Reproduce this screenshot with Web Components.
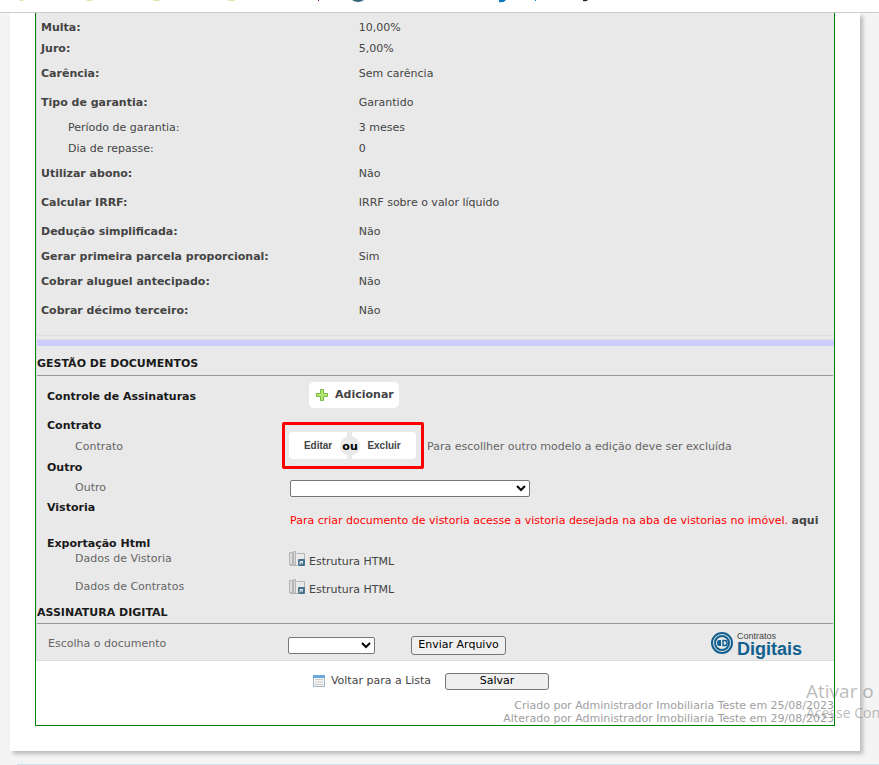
<!DOCTYPE html>
<html lang="pt-BR">
<head>
<meta charset="utf-8">
<meta name="viewport" content="width=device-width, initial-scale=1">
<title>Contrato - Gestão de documentos</title>
<style>
  html, body { margin: 0; height: 100%; }
  body { background: #f4f4f4; color: #444; font: 11px/14px Verdana, "DejaVu Sans", sans-serif; overflow: hidden; }
</style>
</head>
<body>
<contract-page></contract-page>

<template id="t-page">
  <style>
    :host { display: block; }
    main { margin: 0 19px 0 10px; padding: 0 25px 25px 25px; background: #fff; box-shadow: 3px 3px 4px #bbb; }
    .frame { border: 1px solid #008000; border-top: 0; }
    .panel { background: #e9e9e9; border-left: 1px solid #ddd; border-bottom: 1px solid #ddd; }
    .details { padding: 4px 0 10px; }
    .docs { border-bottom: 1px solid #ddd; padding-top: 3px; }
    .bar { height: 6px; border-top: 1px solid #ddd; background: #ccf; }
    footer { margin: 13px 0 0 17px; border-top: 1px solid #cfe4ea; height: 8px; }
    select, button { box-sizing: border-box; font: inherit; color: #000; border: 1px solid #767676; border-radius: 2px; padding: 0; margin: 0; }
    select { height: 17px; background: #fff; display: block; }
    button { background: #efefef; border-radius: 3px; }
    .wide { width: 240px; }
    .short { width: 87px; }
    .send { width: 95px; height: 19px; }
    .save { width: 104px; height: 17px; }
    .red { color: #f00; white-space: nowrap; }
    a { color: #444; text-decoration: none; }
    .icon-link { display: inline-flex; align-items: center; gap: 4px; }
    .icon-link svg { flex: none; }
    .sign { display: flex; align-items: center; height: 36px; padding: 6px 32px 0 11px; box-sizing: border-box; color: #666; }
    .sign label { flex: 0 0 240px; margin-top: -2px; }
    .sign .send { margin-left: 36px; }
    .sign brand-logo { margin-left: auto; }
    .actions { display: flex; justify-content: center; align-items: center; gap: 14px; height: 36px; padding: 2px 8px 0 0; }
    .actions .icon-link { gap: 6px; }
    .log { margin: 0; text-align: right; color: #a0a0a0; line-height: 13px; }
  </style>
  <top-strip></top-strip>
  <main>
    <div class="frame">
      <section class="panel details">
        <detail-row compact><b slot="label">Multa:</b>10,00%</detail-row>
        <detail-row compact><b slot="label">Juro:</b>5,00%</detail-row>
        <detail-row><b slot="label">Carência:</b>Sem carência</detail-row>
        <detail-row><b slot="label">Tipo de garantia:</b>Garantido</detail-row>
        <detail-row compact sub><span slot="label">Período de garantia:</span>3 meses</detail-row>
        <detail-row compact sub><span slot="label">Dia de repasse:</span>0</detail-row>
        <detail-row><b slot="label">Utilizar abono:</b>Não</detail-row>
        <detail-row><b slot="label">Calcular IRRF:</b>IRRF sobre o valor líquido</detail-row>
        <detail-row><b slot="label">Dedução simplificada:</b>Não</detail-row>
        <detail-row compact><b slot="label">Gerar primeira parcela proporcional:</b>Sim</detail-row>
        <detail-row><b slot="label">Cobrar aluguel antecipado:</b>Não</detail-row>
        <detail-row><b slot="label">Cobrar décimo terceiro:</b>Não</detail-row>
      </section>
      <section class="panel docs">
        <div class="bar"></div>
        <section-title style="--above: 12px; --below: 5px">GESTÃO DE DOCUMENTOS</section-title>
        <doc-row kind="add"><span slot="label">Controle de Assinaturas</span><add-button>Adicionar</add-button></doc-row>
        <doc-row><span slot="label">Contrato</span></doc-row>
        <doc-row sub><span slot="label">Contrato</span><edit-choice></edit-choice></doc-row>
        <doc-row><span slot="label">Outro</span></doc-row>
        <doc-row sub kind="field"><label slot="label" for="other">Outro</label><select id="other" class="wide"><option></option></select></doc-row>
        <doc-row kind="note"><span slot="label">Vistoria</span><span class="red">Para criar documento de vistoria acesse a vistoria desejada na aba de vistorias no imóvel. <a href="#"><b>aqui</b></a></span></doc-row>
        <doc-row kind="group"><span slot="label">Exportação Html</span></doc-row>
        <doc-row sub kind="export"><span slot="label">Dados de Vistoria</span><a class="icon-link" href="#"><file-icon></file-icon>Estrutura HTML</a></doc-row>
        <doc-row sub kind="export"><span slot="label">Dados de Contratos</span><a class="icon-link" href="#"><file-icon></file-icon>Estrutura HTML</a></doc-row>
        <section-title>ASSINATURA DIGITAL</section-title>
        <div class="sign">
          <label for="doc">Escolha o documento</label>
          <select id="doc" class="short"><option></option></select>
          <button class="send" type="button">Enviar Arquivo</button>
          <brand-logo></brand-logo>
        </div>
      </section>
      <div class="actions">
        <a class="icon-link" href="#">
          <svg width="12" height="12" viewBox="0 0 12 12" aria-hidden="true"><path d="M0 0h12v12H0z" fill="#a3b6c8"/><path d="M0 0h12v3H0z" fill="#69a9de"/><path d="M1 3h10v8H1z" fill="#f5f5f5"/><path d="M2 4.500h8M2 7h8M2 9.500h8" stroke="#ccc"/></svg>
          Voltar para a Lista</a>
        <button class="save" type="button">Salvar</button>
      </div>
      <p class="log">Criado por Administrador Imobiliaria Teste em 25/08/2023<br>Alterado por Administrador Imobiliaria Teste em 29/08/2023</p>
    </div>
  </main>
  <footer></footer>
  <os-watermark></os-watermark>
</template>

<template id="t-strip">
  <style>
    :host { display: block; height: 12px; background: #fff; border-bottom: 1px solid #ccc; position: relative; z-index: 1; overflow: hidden; }
    svg { display: block; }
  </style>
  <svg width="600" height="4" viewBox="0 0 600 4" aria-hidden="true">
    <path d="M19 0h4l1 1h-4zM25 0h3M86 0h7l-1 1h-5zM153 0h7l-1 1h-5zM228 0h7l-1 1h-5z" fill="#d3eba8"/>
    <path d="M318 0h1v1h-1z" fill="#800080"/>
    <path d="M352 0h12q-6 4-12 0z" fill="#33647c"/>
    <path d="M499 0h7q-2 3-7 2z" fill="#0b7cc1"/>
    <path d="M535 0h1v1h-1z" fill="#0b7cc1"/>
    <path d="M583 0h5q-2 2-5 1z" fill="#222"/>
  </svg>
</template>

<template id="t-detail">
  <style>
    :host { display: grid; grid-template-columns: 40% 1fr; align-items: center; min-height: 29px; }
    :host([compact]) { min-height: 21px; }
    .label { padding-left: 4px; }
    :host([sub]) .label { padding-left: 31px; }
    .value { padding-left: 3px; }
  </style>
  <div class="label"><slot name="label"></slot></div>
  <div class="value"><slot></slot></div>
</template>

<template id="t-doc">
  <style>
    :host { display: grid; grid-template-columns: 31% 1fr; align-items: center; height: 21px; }
    .label { padding-left: 10px; font-weight: bold; color: #1a1a1a; }
    .value { padding-left: 6px; }
    :host([sub]) .label { padding-left: 38px; font-weight: normal; color: #666; }
    :host([kind="add"]) { height: 36px; margin-top: 3px; }
    :host([kind="add"]) .value { padding: 3px 0 0 25px; align-self: start; }
    :host([kind="field"]) { height: 20px; }
    :host([kind="note"]) { height: 33px; }
    :host([kind="note"]) .label { align-self: start; line-height: 20px; }
    :host([kind="note"]) .value { align-self: end; line-height: 20px; }
    :host([kind="group"]) { height: 14px; margin-top: 6px; }
    :host([kind="export"]) { height: 28px; align-items: start; }
    :host([kind="export"]) .label { line-height: 16px; }
    :host([kind="export"]) .value { line-height: 22px; padding-left: 5px; }
  </style>
  <div class="label"><slot name="label"></slot></div>
  <div class="value"><slot></slot></div>
</template>

<template id="t-title">
  <style>
    :host { display: block; padding: var(--above, 0) 1px 0 0; color: #1a1a1a; }
    h2 { margin: 0; padding-bottom: var(--below, 4px); font: bold 11px/12px Verdana, "DejaVu Sans", sans-serif; border-bottom: 1px solid #999; }
  </style>
  <h2><slot></slot></h2>
</template>

<template id="t-add">
  <style>
    :host { display: block; }
    button { display: flex; align-items: center; gap: 7px; height: 26px; padding: 0 5px 0 7px; border: 0; border-radius: 5px; background: #fff; color: #444; font: bold 11px/14px Verdana, "DejaVu Sans", sans-serif; }
  </style>
  <button type="button">
    <svg width="12" height="12" viewBox="0 0 12 12" aria-hidden="true"><path d="M4.500.5h3v4h4v3h-4v4h-3v-4h-4v-3h4z" fill="#b5e86f" stroke="#7ab648"/></svg>
    <slot></slot>
  </button>
</template>

<template id="t-edit">
  <style>
    :host { display: flex; align-items: center; height: 20px; white-space: nowrap; color: #666; }
    .pair { display: flex; gap: 5px; position: relative; margin: -6px 11px -4px -1px; }
    .pair::before { content: ""; position: absolute; inset: -10px -8px -10px -7px; border: 3px solid #f00; border-radius: 2px; }
    button { height: 27px; border: 0; border-radius: 4px; background: #fff; color: #444; font: bold 10px/12px "Liberation Sans", sans-serif; padding: 0; position: relative; }
    .edit { width: 58px; border-radius: 4px 0 0 4px; }
    .del { width: 64px; border-radius: 0 4px 4px 0; }
    .or { position: absolute; left: 51px; top: 4px; z-index: 1; width: 20px; height: 20px; border-radius: 50%; background: #e9e9e9; color: #000; text-align: center; font-weight: bold; line-height: 22px; }
  </style>
  <span class="pair"><button class="edit" type="button">Editar</button><span class="or">ou</span><button class="del" type="button">Excluir</button></span>
  Para escollher outro modelo a edição deve ser excluída
</template>

<template id="t-file">
  <style>:host { display: block; width: 16px; height: 16px; margin-top: -6px; } svg { display: block; }</style>
  <svg width="16" height="16" viewBox="0 0 16 16" aria-hidden="true">
    <path d="M.5 1.500h3v12h-3zM4.500.5h2v13h-2z" fill="#ddd" stroke="#b4b4b4"/>
    <path d="M7.500 2.500h8v7M1 14.500h8" fill="none" stroke="#b4b4b4"/>
    <rect x="9" y="8" width="7" height="7" rx="1" fill="#49708a"/>
    <path d="M11 13.500v-3h2M11 12h2.500M13.500 10v2.500" fill="none" stroke="#dce6ec"/>
  </svg>
</template>

<template id="t-logo">
  <style>
    :host { display: flex; align-items: center; gap: 4px; margin-top: -5px; }
    .name { display: grid; gap: 1px; padding-top: 4px; font-family: "Liberation Sans", sans-serif; }
    small { font-size: 9px; line-height: 7px; color: #444; }
    strong { font-size: 18px; line-height: 16px; color: #12608f; }
    svg { display: block; }
  </style>
  <svg width="22" height="22" viewBox="0 0 22 22" aria-hidden="true" fill="none" stroke="#12608f">
    <circle cx="11" cy="11" r="10" stroke-width="2"/>
    <circle cx="11" cy="11" r="7" stroke-width="2"/>
    <path d="M10 8H8q-2 0-2 3t2 3h2z" fill="#12608f" stroke="none"/>
    <path d="M12 8.500h2q2 0 2 2.500t-2 2.500h-2z" stroke-width="1.500"/>
  </svg>
  <span class="name"><small>Contratos</small><strong>Digitais</strong></span>
</template>

<template id="t-mark">
  <style>
    :host { position: absolute; left: 806px; right: 0; top: 679px; overflow: hidden; white-space: nowrap; pointer-events: none; color: rgba(120, 120, 120, .5); font-family: "Open Sans", sans-serif; }
    div { font-size: 19px; line-height: 24px; }
    div + div { font-size: 14px; line-height: 20px; }
  </style>
  <div>Ativar o</div>
  <div>Acesse Con</div>
</template>

<script>
  const define = (name, id) => customElements.define(name, class extends HTMLElement {
    constructor() {
      super();
      this.attachShadow({ mode: "open" }).append(document.getElementById(id).content.cloneNode(true));
    }
  });
  define("top-strip", "t-strip");
  define("detail-row", "t-detail");
  define("doc-row", "t-doc");
  define("section-title", "t-title");
  define("add-button", "t-add");
  define("edit-choice", "t-edit");
  define("file-icon", "t-file");
  define("brand-logo", "t-logo");
  define("os-watermark", "t-mark");
  define("contract-page", "t-page");
</script>
</body>
</html>
